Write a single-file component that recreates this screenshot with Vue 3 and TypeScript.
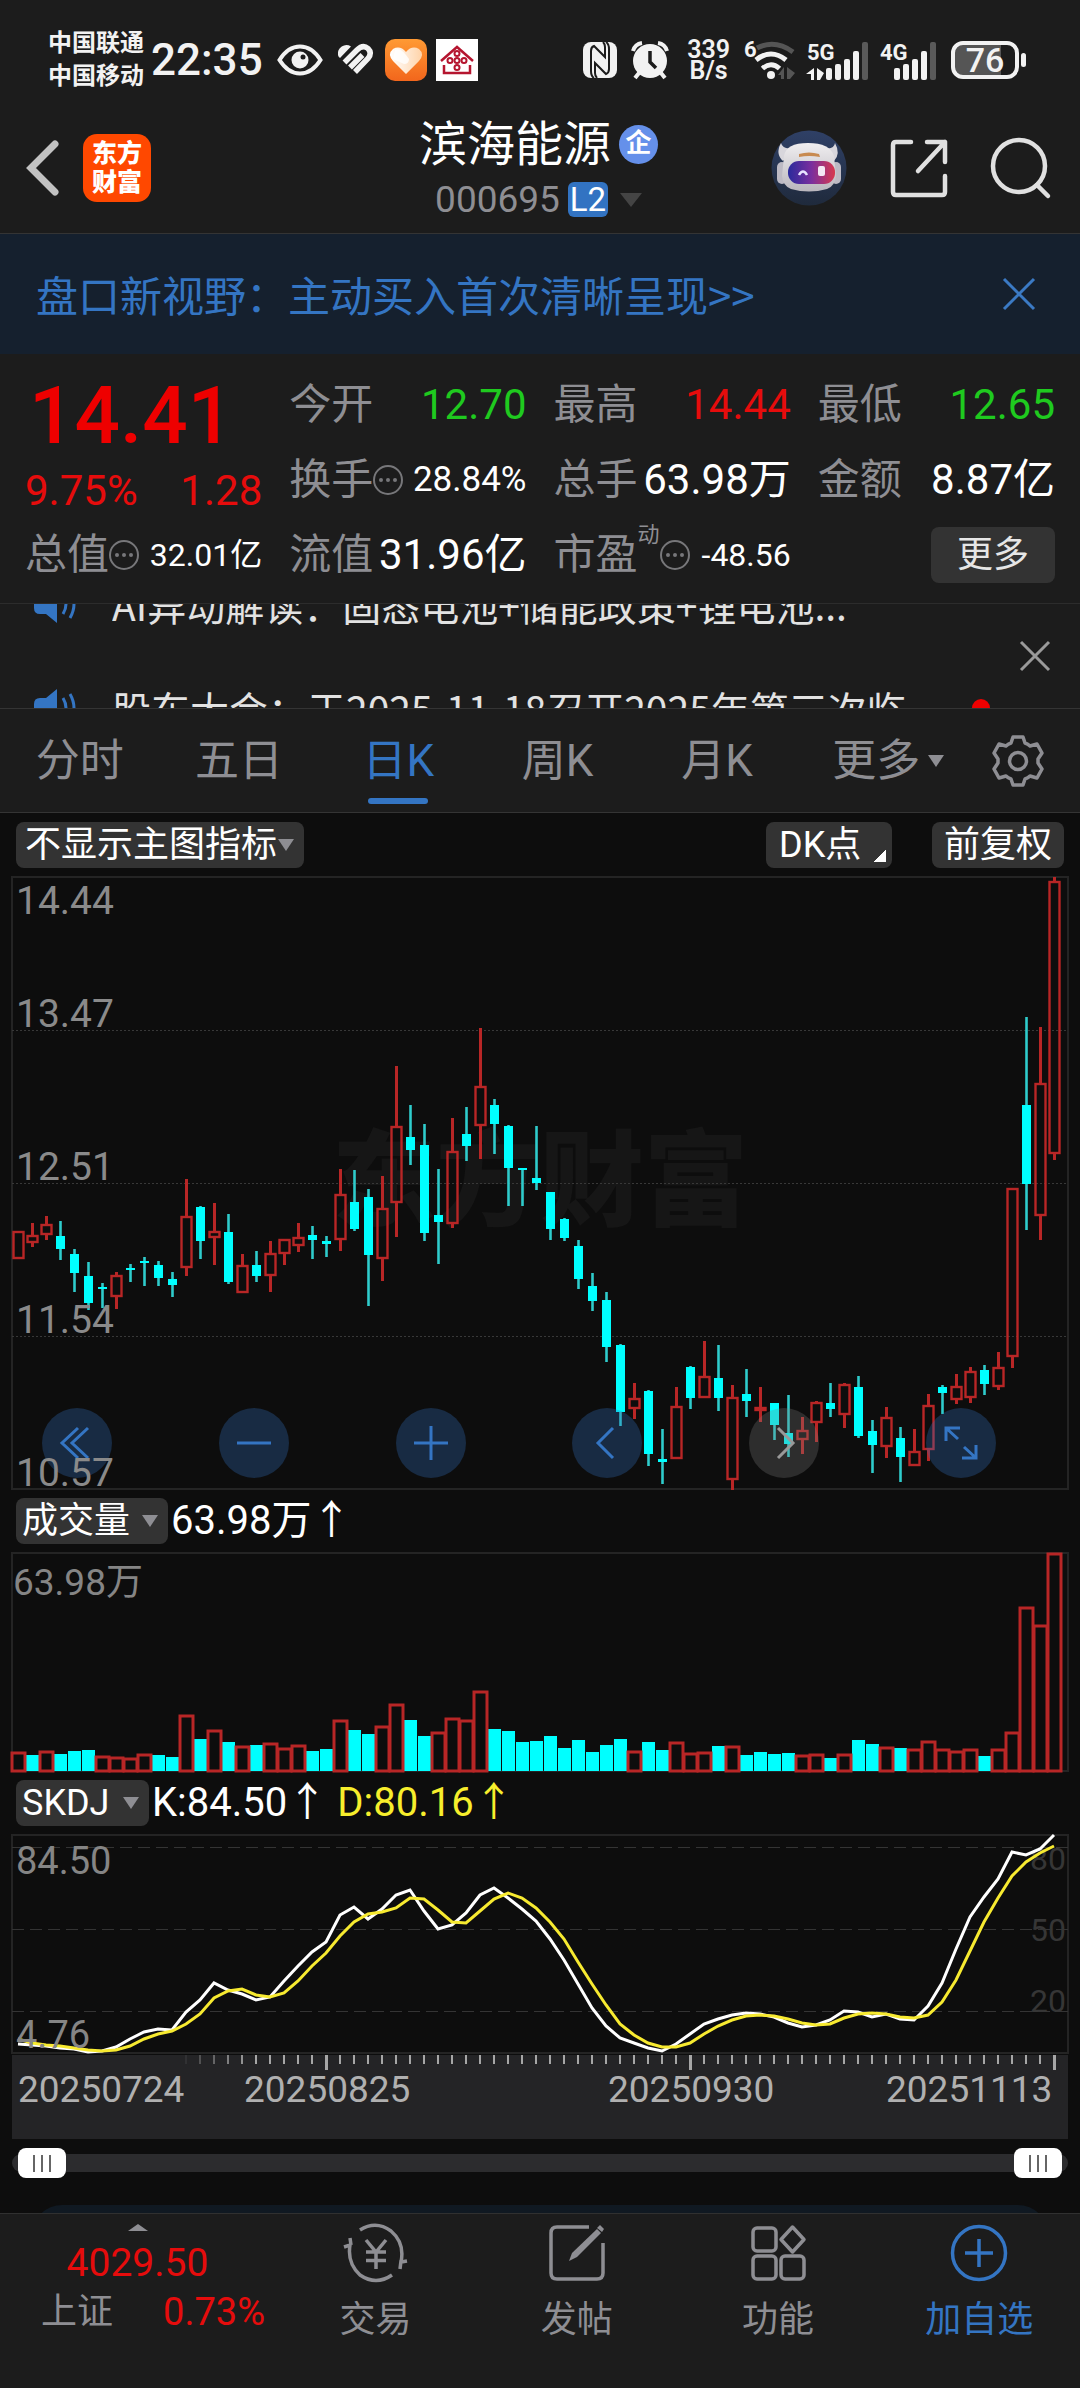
<script setup lang="ts">
import { ref } from 'vue'

type Tone = 'up' | 'down' | 'flat'
type Size = 'mid' | 'small'
interface Stat { label: string; value: string; tone: Tone; info?: boolean; sup?: string; size?: Size }

const stats: Stat[] = [
  { label: '今开', value: '12.70', tone: 'down' },
  { label: '最高', value: '14.44', tone: 'up' },
  { label: '最低', value: '12.65', tone: 'down' },
  { label: '换手', value: '28.84%', tone: 'flat', info: true, size: 'mid' },
  { label: '总手', value: '63.98万', tone: 'flat' },
  { label: '金额', value: '8.87亿', tone: 'flat' },
  { label: '总值', value: '32.01亿', tone: 'flat', info: true, size: 'small' },
  { label: '流值', value: '31.96亿', tone: 'flat' },
  { label: '市盈', value: '-48.56', tone: 'flat', info: true, sup: '动', size: 'small' },
]

const notices = [
  { text: 'AI异动解读：固态电池+储能政策+锂电池...', dot: false },
  { text: '股东大会：于2025-11-18召开2025年第三次临', dot: true },
]

const tabs = ['分时', '五日', '日K', '周K', '月K', '更多']
const activeTab = ref('日K')
const rangeStart = ref(0)
const rangeEnd = ref(100)

// Horizontal centre of bar i inside the 1056-wide plot area
const barX = (i: number): number => 6 + 14 * i

// Each candle: [rising, high, body top, body bottom, low] on a 1500-step price scale
const candleRows: [number, number, number, number, number][] = [
  [1, 885, 885, 947, 947], [1, 861, 895, 908, 922], [1, 846, 867, 889, 903], [0, 857, 893, 926, 952], [0, 926, 938, 985, 1030],
  [0, 958, 993, 1058, 1075], [0, 1008, 1019, 1024, 1070], [1, 981, 991, 1041, 1073], [0, 962, 972, 977, 1007], [0, 946, 955, 961, 1016],
  [0, 954, 965, 996, 1016], [0, 981, 1000, 1015, 1043], [1, 753, 848, 971, 991], [0, 821, 823, 906, 950], [1, 814, 883, 896, 964],
  [0, 840, 885, 1007, 1011], [1, 938, 968, 1032, 1034], [0, 931, 965, 991, 1007], [1, 905, 937, 990, 1030], [1, 901, 903, 935, 964],
  [1, 861, 898, 917, 933], [0, 869, 892, 903, 950], [0, 893, 905, 914, 945], [1, 729, 793, 901, 930], [0, 733, 811, 876, 882],
  [0, 779, 799, 941, 1066], [1, 748, 828, 947, 1003], [1, 477, 627, 811, 896], [0, 573, 652, 682, 720], [0, 620, 671, 887, 906],
  [0, 729, 842, 860, 962], [1, 605, 689, 861, 875], [0, 577, 643, 674, 709], [1, 384, 529, 621, 705], [0, 559, 573, 619, 693],
  [0, 623, 625, 728, 821], [0, 728, 728, 733, 821], [0, 625, 752, 763, 782], [0, 786, 787, 876, 903], [0, 849, 853, 899, 906],
  [0, 904, 919, 1000, 1023], [0, 985, 1017, 1053, 1077], [0, 1031, 1051, 1166, 1202], [0, 1159, 1160, 1326, 1360], [1, 1253, 1294, 1316, 1342],
  [0, 1272, 1273, 1427, 1458], [0, 1366, 1440, 1449, 1501], [1, 1265, 1313, 1437, 1437], [0, 1213, 1214, 1290, 1317], [1, 1151, 1239, 1289, 1290],
  [0, 1160, 1242, 1291, 1322], [1, 1260, 1290, 1490, 1516], [0, 1221, 1280, 1298, 1337], [1, 1264, 1315, 1320, 1349], [0, 1302, 1303, 1357, 1395],
  [0, 1284, 1377, 1403, 1436], [1, 1338, 1372, 1391, 1427], [1, 1299, 1302, 1350, 1400], [0, 1253, 1303, 1318, 1337], [1, 1254, 1259, 1331, 1364],
  [0, 1237, 1264, 1384, 1388], [0, 1346, 1373, 1407, 1474], [1, 1312, 1341, 1409, 1438], [0, 1362, 1389, 1435, 1497], [1, 1366, 1423, 1456, 1457],
  [1, 1281, 1310, 1417, 1445], [0, 1260, 1264, 1279, 1330], [1, 1233, 1264, 1293, 1306], [1, 1215, 1228, 1289, 1302], [0, 1210, 1222, 1256, 1283],
  [1, 1179, 1217, 1262, 1271], [1, 779, 779, 1188, 1217], [0, 356, 573, 767, 880], [1, 381, 522, 843, 903], [1, 15, 26, 690, 708],
]
const priceY = (v: number): number => Math.round((v - 14) * 0.408)
const candles = candleRows.map(([up, high, top, bottom, low], i) => ({
  up: up === 1,
  x: barX(i),
  high: priceY(high),
  top: priceY(top),
  height: Math.max(2, priceY(bottom) - priceY(top)),
  bottom: priceY(bottom),
  low: priceY(low),
}))

// Volume bars: negative marks a falling day
const volumeRows = [
  18, -16, 19, -17, -20, -21, 14, 13, 12, 16, -16, -14, 55, -32, 40, -29, 24, -26, 27, 22, 25, -20, -22, 50, -41,
  -37, 44, 66, -51, -35, 38, 52, 50, 79, -42, -40, -29, -30, -35, -23, -31, -19, -26, -32, 19, -29, -21, 28, 17, 18,
  -25, 24, -16, -19, -17, -18, 15, 16, -13, 16, -31, -27, 23, -23, 21, 29, 21, 19, 21, -15, 21, 38, 163, 145, 217,
]
const volumes = volumeRows.map((v, i) => ({ up: v > 0, x: barX(i), h: Math.abs(v) }))

const kRow = [
  729, 733, 736, 741, 744, 752, 751, 737, 715, 693, 683, 686, 632, 597, 547, 567, 578, 596, 588, 539, 495, 452, 424, 343, 318,
  353, 325, 283, 268, 330, 385, 372, 335, 283, 261, 290, 325, 360, 415, 476, 548, 622, 675, 711, 725, 740, 749, 729, 699, 668,
  653, 643, 637, 640, 648, 667, 678, 672, 656, 629, 633, 648, 640, 653, 657, 615, 545, 445, 347, 288, 233, 153, 161, 145, 103,
]
const dRow = [
  713, 725, 731, 736, 740, 747, 750, 746, 736, 714, 698, 690, 668, 640, 591, 569, 564, 582, 588, 576, 539, 496, 457, 405, 363,
  340, 333, 321, 291, 294, 328, 362, 366, 330, 293, 277, 290, 320, 363, 413, 482, 548, 613, 668, 703, 725, 738, 739, 727, 699,
  674, 656, 645, 642, 645, 655, 666, 671, 669, 651, 639, 635, 640, 649, 652, 642, 604, 536, 451, 363, 292, 224, 184, 156, 136,
]
const toPoints = (row: number[]): string => row.map((v, i) => `${barX(i)},${Math.round((v - 102) / 3)}`).join(' ')
const kLine = toPoints(kRow)
const dLine = toPoints(dRow)

const fade: Record<number, number> = { 12: 0.1, 13: 0.35, 14: 0.5, 15: 0.7, 16: 0.85 }
const ticks = Array.from({ length: 63 }, (_, n) => n + 12).map((i) => ({
  x: barX(i),
  major: i === 22 || i === 48 || i === 74,
  opacity: fade[i] ?? 1,
}))
</script>

<template>
  <div class="app">
    <header class="top">
      <div class="status">
        <div class="carriers"><span>中国联通</span><span>中国移动</span></div>
        <span class="clock">22:35</span>
        <svg width="46" height="32" viewBox="0 0 46 32" aria-hidden="true">
          <path d="M2.500 16 Q11 2.500 23 2.500 T43.500 16 Q35 29.500 23 29.500 T2.500 16Z" fill="none" stroke="#f2f2f2" stroke-width="4" />
          <circle cx="23" cy="16" r="8.500" fill="#f2f2f2" /><circle cx="26" cy="13" r="2.500" fill="#1c1c1c" />
        </svg>
        <svg class="s-heart" width="36" height="32" viewBox="0 0 36 32" aria-hidden="true">
          <path d="M1 11 A8.500 8.500 0 0 1 14 2.500 L3 14 Q1 12.500 1 11Z" fill="#f2f2f2" />
          <path d="M7.500 18.500 L20 6 Q26 0 31 4.500 Q35.500 9 31 14.500 L18 28" fill="none" stroke="#f2f2f2" stroke-width="5.500" />
          <path d="M13 23.500 L25.500 11" stroke="#f2f2f2" stroke-width="5.500" />
        </svg>
        <svg class="s-orange" width="42" height="42" viewBox="0 0 42 42" aria-hidden="true">
          <defs>
            <linearGradient id="og" x1="0" y1="0" x2="0" y2="1"><stop offset="0" stop-color="#ff9a34" /><stop offset="1" stop-color="#f2661c" /></linearGradient>
            <linearGradient id="hg" x1="0" y1="0" x2="1" y2="0"><stop offset="0" stop-color="#fff" /><stop offset="1" stop-color="#ffd3a8" /></linearGradient>
          </defs>
          <rect width="42" height="42" rx="10" fill="url(#og)" />
          <path d="M21 35 L8 22 Q2 15 8 10 Q15 6 21 13 Q27 6 34 10 Q40 15 34 22Z" fill="url(#hg)" />
          <path d="M10 11 Q15 8 21 16 L24 20 Q24 25 19 25 L8 20Z" fill="#fff" opacity=".8" />
        </svg>
        <svg class="s-house" width="42" height="42" viewBox="0 0 42 42" aria-hidden="true">
          <rect width="42" height="42" fill="#fff" />
          <g fill="none" stroke="#b5152f" stroke-width="2">
            <path d="M5 22 L21 8 L37 22" stroke-width="2.500" /><path d="M8 26 V34 H34 V26" stroke-width="2.500" />
            <circle cx="21" cy="14.500" r="2.500" /><circle cx="21" cy="21.500" r="2.500" /><circle cx="21" cy="28.500" r="2.500" /><circle cx="14" cy="21.500" r="2.500" /><circle cx="28" cy="21.500" r="2.500" />
          </g>
        </svg>
        <span class="spacer"></span>
        <svg width="34" height="36" viewBox="0 0 34 36" aria-hidden="true">
          <rect width="34" height="36" rx="8" fill="#f2f2f2" />
          <path d="M11 36 Q8 34 8 29 V9 Q8 5 11 4 L22 15 V5 Q22 2 20 0" fill="none" stroke="#1c1c1c" stroke-width="2" />
          <path d="M23 0 Q26 2 26 7 V27 Q26 31 23 32 L12 21 V31 Q12 34 14 36" fill="none" stroke="#1c1c1c" stroke-width="2" />
        </svg>
        <svg class="s-alarm" width="38" height="38" viewBox="0 0 38 38" aria-hidden="true">
          <path d="M2 10 Q4 3 11 2 M27 2 Q34 3 36 10" fill="none" stroke="#f2f2f2" stroke-width="4" />
          <path d="M8 32 L4 37 M30 32 L34 37" stroke="#f2f2f2" stroke-width="4" />
          <circle cx="19" cy="20" r="17" fill="#f2f2f2" /><path d="M19 10 V21 L25 27" fill="none" stroke="#1c1c1c" stroke-width="3.500" />
        </svg>
        <div class="speed"><span>339</span><span>B/s</span></div>
        <svg class="s-wifi" width="52" height="40" viewBox="0 0 52 40" aria-hidden="true">
          <text x="0" y="17" class="tiny">6</text>
          <path d="M13 8 Q31 -1 49 12" fill="none" stroke="#555" stroke-width="5" />
          <path d="M12 20 Q27 8 42 20" fill="none" stroke="#f2f2f2" stroke-width="5" />
          <path d="M18.500 28.500 Q27 21 35.500 28.500" fill="none" stroke="#f2f2f2" stroke-width="5" />
          <circle cx="27" cy="35" r="4" fill="#f2f2f2" />
          <path d="M40 27 V39 H37 V35 H34Z M43 27 L51 33 L46 39 H43Z" fill="#555" />
        </svg>
        <svg class="s-sig" width="64" height="40" viewBox="0 0 64 40" aria-hidden="true">
          <text x="1" y="20" class="tiny">5G</text>
          <path d="M8 28 V40 H5 V34 H0Z M11 28 L18 33 L14 40 H11Z" fill="#f2f2f2" />
          <g fill="#f2f2f2"><rect x="20" y="28" width="6" height="12" rx="2" /><rect x="29" y="24" width="6" height="16" rx="2" /><rect x="38" y="19" width="6" height="21" rx="2" /><rect x="47" y="11" width="6" height="29" rx="2" /></g>
          <rect x="56" y="2" width="6" height="38" rx="2" fill="#5a5a5a" />
        </svg>
        <svg class="s-sig" width="58" height="40" viewBox="0 0 58 40" aria-hidden="true">
          <text x="0" y="20" class="tiny">4G</text>
          <g fill="#f2f2f2"><rect x="14" y="28" width="6" height="12" rx="2" /><rect x="23" y="24" width="6" height="16" rx="2" /><rect x="32" y="19" width="6" height="21" rx="2" /><rect x="41" y="11" width="6" height="29" rx="2" /></g>
          <rect x="50" y="2" width="6" height="38" rx="2" fill="#5a5a5a" />
        </svg>
        <div class="battery"><span>76</span></div>
      </div>
      <div class="nav">
        <div class="nav-left">
          <button class="plain" aria-label="返回">
            <svg width="34" height="56" viewBox="0 0 34 56"><path d="M29 4 L5 28 L29 52" fill="none" stroke="#c2c2c2" stroke-width="7" stroke-linecap="round" /></svg>
          </button>
          <a href="#" class="logo"><span>东方</span><span>财富</span></a>
        </div>
        <div class="title">
          <h1>滨海能源<span class="corp">企</span></h1>
          <div class="code"><span>000695</span><b>L2</b><i class="tri dim"></i></div>
        </div>
        <div class="nav-right">
          <button class="plain" aria-label="智能助手">
            <svg width="76" height="76" viewBox="0 0 76 76">
              <defs>
                <linearGradient id="bg1" x1="0" y1="0" x2="0" y2="1"><stop offset="0" stop-color="#2f4066" /><stop offset="1" stop-color="#1f2a3c" /></linearGradient>
                <linearGradient id="vis" x1="0" y1="0" x2="1" y2="0"><stop offset="0" stop-color="#2a2a9c" /><stop offset=".5" stop-color="#7a2f9e" /><stop offset="1" stop-color="#d8384e" /></linearGradient>
                <linearGradient id="hd" x1="0" y1="0" x2="0" y2="1"><stop offset="0" stop-color="#f0eef0" /><stop offset="1" stop-color="#b9b6bd" /></linearGradient>
              </defs>
              <circle cx="38" cy="38" r="37.500" fill="url(#bg1)" />
              <path d="M10 13 Q4 24 12 31 L22 18 Q12 20 10 13Z M64 13 Q70 24 63 31 L53 18 Q63 20 64 13Z" fill="#d8d6dc" />
              <rect x="6" y="32" width="10" height="22" rx="5" fill="#bdbac4" /><rect x="60" y="32" width="10" height="22" rx="5" fill="#bdbac4" />
              <path d="M13 26 Q15 13 37 13 T63 26 L65 46 Q64 56 56 59 Q38 64 20 59 Q12 56 11 46Z" fill="url(#hd)" />
              <path d="M28 24 Q38 21 48 24 L49 27 Q38 25 28 27Z" fill="#c88a50" />
              <rect x="17" y="31" width="47" height="23" rx="11" fill="url(#vis)" />
              <path d="M28 45 Q32 38 36 45" fill="none" stroke="#e8e4ff" stroke-width="2.500" /><rect x="47" y="36" width="7" height="10" rx="2" fill="#f4e8f4" />
            </svg>
          </button>
          <button class="plain" aria-label="分享">
            <svg width="60" height="60" viewBox="0 0 60 60" fill="none" stroke="#e0e0e0" stroke-width="4.500" stroke-linecap="round" stroke-linejoin="round"><path d="M22 4 H7 Q4 4 4 7 V54 Q4 57 7 57 H53 Q56 57 56 54 V38 M38 4 H56 V24 M56 4 L29 33" /></svg>
          </button>
          <button class="plain" aria-label="搜索">
            <svg width="60" height="62" viewBox="0 0 60 62" fill="none" stroke="#e0e0e0" stroke-width="4.500" stroke-linecap="round"><circle cx="28" cy="29" r="26" /><path d="M46 48 L57 59" /></svg>
          </button>
        </div>
      </div>
    </header>

    <div class="banner">
      <a href="#">盘口新视野：主动买入首次清晰呈现&gt;&gt;</a>
      <button class="plain" aria-label="关闭"><svg width="34" height="34" viewBox="0 0 34 34"><path d="M2 2 L32 32 M32 2 L2 32" stroke="#3b7ac4" stroke-width="3" /></svg></button>
    </div>

    <section class="quote">
      <div class="price">
        <strong>14.41</strong>
        <div><span>9.75%</span><span>1.28</span></div>
      </div>
      <div v-for="s in stats" :key="s.label" class="stat">
        <span class="label">{{ s.label }}</span>
        <sup v-if="s.sup">{{ s.sup }}</sup>
        <svg v-if="s.info" width="30" height="30" viewBox="0 0 30 30" aria-hidden="true"><circle cx="15" cy="15" r="14" fill="none" stroke="#77777a" stroke-width="2" /><g fill="#77777a"><circle cx="8" cy="15" r="2" /><circle cx="15" cy="15" r="2" /><circle cx="22" cy="15" r="2" /></g></svg>
        <span class="value" :class="[s.tone, s.size]">{{ s.value }}</span>
      </div>
      <button class="more">更多</button>
    </section>

    <section class="notices">
      <ul>
        <li v-for="n in notices" :key="n.text">
          <svg width="44" height="40" viewBox="0 0 44 40" aria-hidden="true"><path d="M0 16 Q0 10 6 10 H12 L23 1 V39 L12 30 H6 Q0 30 0 24Z" fill="#3475c3" /><path d="M29 10 Q35 20 29 30 M36 6 Q44 20 36 34" fill="none" stroke="#3475c3" stroke-width="3" /></svg>
          <a href="#">{{ n.text }}</a>
          <i v-if="n.dot" class="dot"></i>
        </li>
      </ul>
      <button class="plain" aria-label="关闭公告"><svg width="30" height="30" viewBox="0 0 30 30"><path d="M1 1 L29 29 M29 1 L1 29" stroke="#9a9a9a" stroke-width="3" /></svg></button>
    </section>

    <nav class="tabs">
      <button v-for="t in tabs" :key="t" :class="{ on: t === activeTab }" @click="activeTab = t">{{ t }}<i v-if="t === '更多'" class="tri"></i></button>
      <button class="gear" aria-label="设置">
        <svg width="52" height="52" viewBox="0 0 52 52" fill="none" stroke="#8e8e93" stroke-width="3.500" stroke-linejoin="round"><path d="M21 2 H31 L33 8 Q36 9 38 11 L45 9 L50 18 L46 24 V28 L50 34 L45 43 L38 41 Q36 43 33 44 L31 50 H21 L19 44 Q16 43 14 41 L7 43 L2 34 L6 28 V24 L2 18 L7 9 L14 11 Q16 9 19 8Z" /><circle cx="26" cy="26" r="8.500" /></svg>
      </button>
    </nav>

    <main class="charts">
      <div class="bar">
        <label class="pick wide"><select aria-label="主图指标"><option>不显示主图指标</option></select><i class="tri"></i></label>
        <span class="spacer"></span>
        <button class="chip dk">DK点<i></i></button>
        <button class="chip">前复权</button>
      </div>
      <div class="plot">
        <div class="mark">东方财富</div>
        <svg width="100%" height="612" viewBox="0 0 1056 612" preserveAspectRatio="none">
          <g stroke="#383838" stroke-width="1" stroke-dasharray="2 2"><path d="M0 153.500 H1056 M0 306.500 H1056 M0 459.500 H1056" /></g>
          <g v-for="c in candles" :key="c.x">
            <g v-if="c.up" fill="none" stroke="#b82626" transform="translate(0.5 0)">
              <path :d="`M${c.x} ${c.high} V${c.top} M${c.x} ${c.bottom} V${c.low}`" stroke-width="3" />
              <rect :x="c.x - 5" :y="c.top" width="10" :height="c.height" stroke-width="2.400" />
            </g>
            <template v-else>
              <path :d="`M${c.x + 0.5} ${c.high} V${c.low}`" stroke="#2fcccc" stroke-width="2.600" />
              <rect :x="c.x - 4" :y="c.top" width="9" :height="c.height" fill="#00ffff" />
            </template>
          </g>
        </svg>
        <div class="controls">
          <button aria-label="最早"><svg width="34" height="34" viewBox="0 0 34 34"><path d="M18 2 L2 17 L18 32 M28 2 L12 17 L28 32" /></svg></button>
          <button aria-label="缩小"><svg width="34" height="34" viewBox="0 0 34 34"><path d="M0 17 H34" /></svg></button>
          <button aria-label="放大"><svg width="34" height="34" viewBox="0 0 34 34"><path d="M0 17 H34 M17 0 V34" /></svg></button>
          <button aria-label="向左"><svg width="34" height="34" viewBox="0 0 34 34"><path d="M23 2 L8 17 L23 32" /></svg></button>
          <button aria-label="向右" class="off"><svg width="34" height="34" viewBox="0 0 34 34"><path d="M11 2 L26 17 L11 32" /></svg></button>
          <button aria-label="全屏"><svg width="34" height="34" viewBox="0 0 34 34"><path d="M2 15 V2 H16 M2 2 L14 13 M32 19 V32 H18 M32 32 L20 21" /></svg></button>
        </div>
        <span class="tag high">14.44</span>
        <div class="scale">
          <span>13.47</span><span>12.51</span><span>11.54</span><span>10.57</span>
        </div>
      </div>

      <div class="bar">
        <label class="pick"><select aria-label="成交量指标"><option>成交量</option></select><i class="tri"></i></label>
        <span class="num">63.98万↑</span>
      </div>
      <div class="plot">
        <svg width="100%" height="218" viewBox="0 0 1056 218" preserveAspectRatio="none">
          <template v-for="v in volumes" :key="v.x">
            <rect v-if="!v.up" :x="v.x - 6" :y="218 - v.h" width="13" :height="v.h" fill="#00ffff" />
          </template>
          <template v-for="v in volumes" :key="v.x">
            <rect v-if="v.up" :x="v.x - 6" :y="218 - v.h" width="13" :height="v.h" fill="none" stroke="#b82626" stroke-width="3" />
          </template>
        </svg>
        <span class="tag vol">63.98万</span>
      </div>

      <div class="bar">
        <label class="pick skdj"><select aria-label="副图指标"><option>SKDJ</option></select><i class="tri"></i></label>
        <span class="num">K:84.50↑</span><span class="num yellow">D:80.16↑</span>
      </div>
      <div class="plot">
        <div class="levels"><span>80</span><span>50</span><span>20</span></div>
        <svg width="100%" height="218" viewBox="0 0 1056 218" preserveAspectRatio="none">
          <path d="M0 12.500 H1056 M0 94.500 H1056 M0 176.500 H1056" stroke="#343434" stroke-width="1" stroke-dasharray="12 6" />
          <polyline :points="kLine" fill="none" stroke="#ffffff" stroke-width="3" />
          <polyline :points="dLine" fill="none" stroke="#f7ea30" stroke-width="3" />
        </svg>
        <span class="tag">84.50</span><span class="tag low">4.76</span>
      </div>
      <div class="axis">
        <svg width="100%" height="15" viewBox="0 0 1056 15" preserveAspectRatio="none">
          <rect v-for="t in ticks" :key="t.x" :x="t.x - 1" y="0" :width="t.major ? 3 : 2" :height="t.major ? 15 : 9" :opacity="t.opacity" fill="#a6a6a6" />
        </svg>
        <div class="dates"><span>20250724</span><span>20250825</span><span>20250930</span><span>20251113</span></div>
      </div>
      <div class="range">
        <input v-model.number="rangeStart" type="range" min="0" max="100" aria-label="起始日期" />
        <input v-model.number="rangeEnd" type="range" min="0" max="100" aria-label="结束日期" />
      </div>
      <div class="peek"><div></div></div>
    </main>

    <footer class="dock">
      <a href="#" class="index">
        <i class="tri upward"></i>
        <strong>4029.50</strong>
        <span><em>上证</em><b>0.73%</b></span>
      </a>
      <a href="#"><svg width="66" height="60" viewBox="0 0 66 60" fill="none" stroke="#8e8e93" stroke-width="3.500"><path d="M17 7 Q33 -3 48 8 Q62 20 58 39 L64 38 M57 46 L58 38 M49 52 Q33 63 17 52 Q4 40 7 22 L1 24 M7 15 L8 22" /><path d="M23 17 L33 29 L43 17 M33 29 V46 M23 29 H43 M23 37.500 H43" /></svg>交易</a>
      <a href="#"><svg width="60" height="60" viewBox="0 0 60 60" fill="none" stroke="#8e8e93" stroke-width="3.500"><path d="M42 4 H10 Q4 4 4 10 V50 Q4 56 10 56 H50 Q56 56 56 50 V20" /><path d="M22 38 L25 30 L50 6 L54 10 L30 34Z" fill="#8e8e93" stroke="none" /><path d="M53 2 L57 6 L55 9 L50 5Z" fill="#8e8e93" stroke="none" /></svg>发帖</a>
      <a href="#"><svg width="60" height="60" viewBox="0 0 60 60" fill="none" stroke="#8e8e93" stroke-width="3.500"><rect x="5" y="5" width="23" height="23" rx="4" /><rect x="5" y="33" width="23" height="23" rx="4" /><rect x="33" y="33" width="23" height="23" rx="4" /><path d="M44.500 4 L56 16.500 L44.500 29 L33 16.500Z" stroke-linejoin="round" /></svg>功能</a>
      <a href="#" class="add"><svg width="60" height="60" viewBox="0 0 60 60" fill="none" stroke="#3475c3" stroke-width="3.500"><circle cx="30" cy="30" r="26.500" /><path d="M16 30 H44 M30 16 V44" /></svg>加自选</a>
    </footer>
  </div>
</template>

<style>
body { background: #0d0d0d; }
</style>

<style scoped>
.app {
  display: flex;
  flex-direction: column;
  min-height: 100vh;
  background: #0d0d0d;
  color: #fff;
  font-family: Roboto, "Noto Sans CJK SC", sans-serif;
  font-size: 42px;
  overflow: hidden;
}
* { box-sizing: border-box; }
button, select, input { font: inherit; color: inherit; border: 0; margin: 0; padding: 0; background: none; }
a { color: inherit; text-decoration: none; }
svg { display: block; flex: none; overflow: visible; }
i, em { font-style: normal; }
.plain { display: grid; place-items: center; }
.spacer { flex: 1; }
.tri { display: block; width: 0; height: 0; border: solid transparent; border-width: 12px 8px 0; border-top-color: #8e8e93; }

.top { padding-top: 10px; background: #1c1c1c; border-bottom: 1px solid #343434; }
.status { display: flex; align-items: center; height: 92px; padding: 8px 61px 0 48px; color: #f2f2f2; font-weight: 500; }
.carriers { display: flex; flex-direction: column; font-size: 24px; line-height: 33px; margin-right: 7px; font-weight: 700; }
.clock { font-size: 44px; line-height: 50px; margin-right: 14px; }
.s-heart { margin-left: 14px; }
.s-orange { margin-left: 12px; }
.s-house { margin-left: 9px; }
.s-alarm { margin-left: 14px; }
.speed { display: flex; flex-direction: column; align-items: center; font-size: 25px; line-height: 21px; margin-left: 18px; font-weight: 600; }
.s-wifi { margin-left: 14px; }
.s-sig { margin-left: 10px; }
.tiny { font-size: 22px; font-weight: 700; fill: #f2f2f2; }
.battery { position: relative; width: 68px; height: 38px; margin-left: 13px; border: 4px solid #f2f2f2; border-radius: 12px; background: linear-gradient(90deg, #555 76%, #1c1c1c 76%); display: grid; place-items: center; font-size: 34px; line-height: 30px; }
.battery::after { content: ""; position: absolute; left: 66px; top: 8px; width: 5px; height: 14px; border-radius: 3px; background: #f2f2f2; }

.nav { display: grid; grid-template-columns: 1fr auto 1fr; align-items: center; height: 131px; padding: 0 29px 0 26px; }
.nav-left { display: flex; align-items: center; gap: 23px; }
.logo { display: flex; flex-direction: column; align-items: center; justify-content: center; width: 68px; height: 68px; border-radius: 14px; background: #ff4800; font-size: 25px; line-height: 29px; font-weight: 900; }
.title { display: flex; flex-direction: column; align-items: center; }
h1 { display: flex; align-items: center; gap: 8px; margin: 0; font-size: 48px; line-height: 64px; font-weight: 400; }
.corp { width: 39px; height: 39px; border-radius: 50%; background: #6590ea; font-size: 26px; line-height: 37px; text-align: center; font-weight: 700; }
.code { display: flex; align-items: center; font-size: 37px; line-height: 46px; color: #8e8e93; gap: 8px; }
.code b { width: 40px; height: 35px; border-radius: 6px; background: #3273c2; color: #fff; font-size: 33px; line-height: 36px; font-weight: 400; text-align: center; }
.dim { border-width: 14px 11px 0; border-top-color: #444; margin-left: 4px; }
.nav-right { display: flex; align-items: center; justify-content: flex-end; gap: 42px; }

.banner { display: flex; align-items: center; justify-content: space-between; height: 120px; padding: 0 44px 0 36px; background: #15202e; color: #3475c3; line-height: 60px; font-family: "Noto Sans CJK SC", sans-serif; }

.quote { display: grid; grid-template-columns: repeat(4, 1fr); grid-auto-rows: 75px; column-gap: 27px; padding: 13px 25px 11px 25px; background: #1c1c1c; }
.price { grid-row: span 2; display: flex; flex-direction: column; color: #e60c0c; }
.price strong { font-size: 80px; line-height: 98px; font-weight: 500; padding-left: 4px; color: #ee0000; }
.price div { display: flex; justify-content: space-between; line-height: 52px; }
.stat { display: flex; align-items: center; min-width: 0; line-height: 60px; white-space: nowrap; }
.label { color: #8e8e93; }
sup { align-self: flex-start; font-size: 22px; line-height: 36px; color: #8e8e93; vertical-align: baseline; }
.value { margin-left: auto; }
.mid { font-size: 35px; }
.small { font-size: 32px; }
.up { color: #e60c0c; }
.down { color: #1fca1f; }
.more { align-self: center; justify-self: end; width: 124px; height: 56px; border-radius: 8px; background: #333; color: #e6e6e6; font-size: 36px; line-height: 56px; }

.notices { display: flex; align-items: center; height: 105px; overflow: hidden; background: #1c1c1c; border-top: 1px solid #2c2c2c; padding: 0 30px 0 34px; }
.notices ul { flex: 1; align-self: flex-start; min-width: 0; list-style: none; margin: -52px 0 0; padding: 0; }
.notices li { display: flex; align-items: center; height: 104px; font-family: "Noto Sans CJK SC", sans-serif; font-size: 39px; color: #e2e2e2; white-space: nowrap; }
.notices a { width: 810px; margin-left: 34px; overflow: hidden; line-height: 56px; }
.dot { width: 18px; height: 18px; border-radius: 50%; background: #ee0000; margin-left: 50px; }

.tabs { display: flex; height: 105px; background: #1c1c1c; border-top: 1px solid #343434; border-bottom: 1px solid #343434; color: #8e8e93; }
.tabs button { position: relative; flex: 1; font-size: 44px; line-height: 104px; }
.tabs .gear { flex: 0 0 124px; display: grid; place-items: center; }
.tabs .on { color: #3475c3; }
.tabs .on::after { content: ""; position: absolute; left: 50%; bottom: 8px; width: 60px; height: 6px; margin-left: -30px; border-radius: 3px; background: #3475c3; }
.tabs .tri { position: absolute; right: 12px; top: 46px; }

.charts { flex: 1; padding: 0 12px; }
.bar { display: flex; align-items: center; height: 64px; padding: 0 4px; }
.pick { display: block; position: relative; width: 152px; height: 46px; }
.pick select { display: block; appearance: none; width: 100%; height: 46px; padding-left: 6px; border-radius: 8px; background: #333; font-size: 36px; line-height: 46px; }
.pick .tri { position: absolute; right: 10px; top: 17px; pointer-events: none; }
.wide { width: 288px; }
.wide select { padding-left: 9px; }
.skdj { width: 133px; }
.chip { position: relative; width: 132px; height: 46px; border-radius: 8px; background: #333; font-size: 36px; line-height: 46px; margin-left: 40px; }
.dk { width: 126px; text-align: left; padding-left: 13px; }
.dk i { position: absolute; right: 6px; bottom: 6px; width: 12px; height: 12px; background: linear-gradient(135deg, transparent 50%, #fff 50%); }
.num { font-size: 40px; line-height: 60px; margin-left: 3px; white-space: nowrap; }
.yellow { color: #f7ee2c; margin-left: 10px; }

.plot { position: relative; outline: 2px solid #242424; outline-offset: -1px; }
.plot > svg { position: relative; }
.mark { position: absolute; inset: 0; display: grid; place-items: center; font-size: 104px; line-height: 120px; font-weight: 900; color: #161616; }
.controls { position: absolute; left: 30px; right: 72px; bottom: 11px; display: flex; justify-content: space-between; }
.controls button { display: grid; place-items: center; width: 70px; height: 70px; border-radius: 50%; background: rgba(49, 114, 192, 0.3); }
.controls svg { fill: none; stroke: #3475c3; stroke-width: 3; }
.controls .off { background: rgba(128, 128, 128, 0.28); }
.controls .off svg { stroke: #999; }
.scale { position: absolute; left: 4px; top: 0; bottom: 0; display: grid; grid-template-rows: repeat(4, 1fr); align-items: end; font-size: 39px; line-height: 32px; color: #8a8a8a; pointer-events: none; }
.tag { position: absolute; left: 4px; top: 6px; font-size: 38px; line-height: 40px; color: #858585; }
.high { top: 4px; font-size: 39px; color: #8a8a8a; }
.vol { left: 1px; top: 10px; font-size: 37px; }
.low { top: auto; bottom: -2px; }
.levels { position: absolute; right: 2px; top: 8px; bottom: 36px; display: flex; flex-direction: column; justify-content: space-between; font-size: 32px; line-height: 32px; color: #363636; }

.axis { margin-top: 2px; height: 84px; background: #242426; }
.dates { display: grid; grid-template-columns: 226fr 364fr 278fr 168fr; padding: 0 14px 0 6px; font-size: 37px; line-height: 40px; color: #b0b0b0; }

.range { position: relative; height: 30px; margin-top: 9px; }
.range::before { content: ""; position: absolute; left: 0; right: 0; top: 6px; height: 18px; border-radius: 9px; background: #2c2c2e; }
.range input { position: absolute; left: 6px; width: calc(100% - 12px); height: 30px; appearance: none; pointer-events: none; }
.range input::-webkit-slider-thumb {
  appearance: none; pointer-events: auto; width: 48px; height: 30px; border-radius: 8px;
  background:
    linear-gradient(#666, #666) 15px 7px / 2px 17px no-repeat,
    linear-gradient(#666, #666) 23px 7px / 2px 17px no-repeat,
    linear-gradient(#666, #666) 31px 7px / 2px 17px no-repeat,
    #fff;
}
.peek { height: 8px; margin: 27px 20px 0; overflow: hidden; }
.peek div { height: 60px; border-radius: 30px; background: #101922; }

.dock { display: grid; grid-template-columns: 275px repeat(4, 1fr); height: 176px; background: #1c1c1c; border-top: 1px solid #303030; }
.dock a { display: flex; flex-direction: column; align-items: center; padding-top: 9px; font-size: 36px; line-height: 52px; color: #8e8e93; gap: 11px; }
.dock .add { color: #3475c3; }
.dock .index { gap: 0; padding-top: 10px; line-height: 49px; }
.upward { border-width: 0 10px 7px; border-bottom-color: #8e8e93; }
.index strong { font-size: 39px; font-weight: 400; color: #e60c0c; margin-top: 8px; }
.index span { display: flex; align-self: stretch; justify-content: space-between; padding: 0 10px 0 41px; }
.index b { font-size: 38px; font-weight: 400; color: #e60c0c; }
</style>
